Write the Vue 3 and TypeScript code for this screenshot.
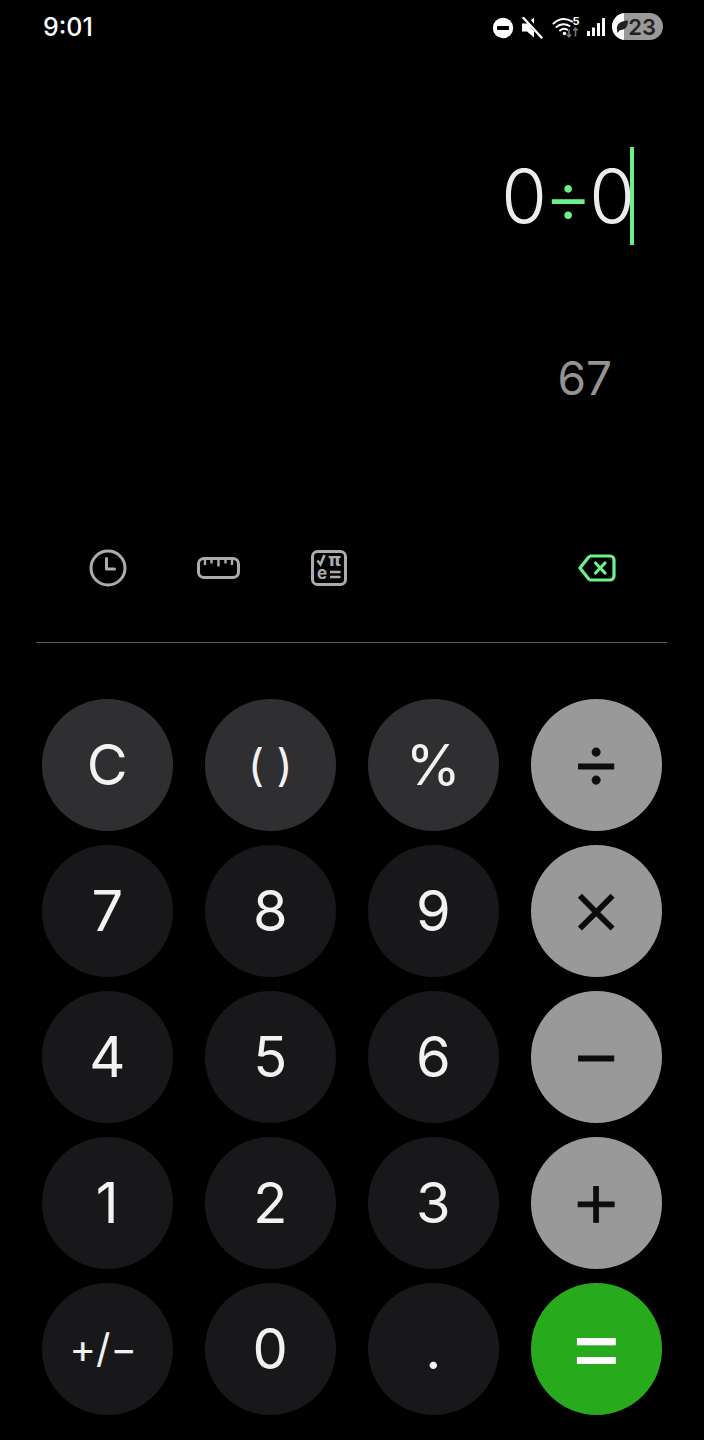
<template>
  <div class="screen">
    <div class="status-bar">
      <span class="time">9:01</span>
      <div class="status-icons">
        <svg class="ic-dnd" width="22" height="22" viewBox="0 0 22 22">
          <circle cx="11" cy="11" r="10.200" fill="#fff" />
          <rect x="5" y="9" width="12" height="4" rx="0.800" fill="#000" />
        </svg>
        <svg class="ic-mute" width="22" height="23" viewBox="0 0 22 23">
          <path d="M1 7.500h5L13 1.500v20L6 15.500H1z" fill="#fff" />
          <path d="M4 1 21 21" stroke="#000" stroke-width="5" />
          <path d="M2.500 2 20.500 21.500" stroke="#fff" stroke-width="2.400" stroke-linecap="round" />
        </svg>
        <svg class="ic-wifi" width="30" height="24" viewBox="0 0 30 24">
          <path d="M1.500 8.500C7 3.500 14 3 20 6.500M4.500 12c4-3.500 9.500-3.500 13-1M8 15.500c2.500-2 5-2 7-.8" fill="none" stroke="#fff" stroke-width="2" stroke-linecap="round" />
          <circle cx="12.500" cy="18.500" r="1.800" fill="#fff" />
          <text x="20.500" y="9.500" class="wifi-five">5</text>
          <path d="M17 14.500v7M14.800 19.500l2.200 2.300 2.200-2.300" fill="none" stroke="#777" stroke-width="1.600" />
          <path d="M23.500 21.500V13.500M21.300 15.500l2.200-2.300 2.200 2.300" fill="none" stroke="#777" stroke-width="1.600" />
        </svg>
        <svg class="ic-signal" width="20" height="20" viewBox="0 0 20 20">
          <rect x="1" y="14" width="3" height="5" rx="0.500" fill="#fff" />
          <rect x="6" y="10.500" width="3" height="8.500" rx="0.500" fill="#fff" />
          <rect x="11" y="6" width="3" height="13" rx="0.500" fill="#fff" />
          <rect x="16" y="1" width="3" height="18" rx="0.500" fill="#fff" />
        </svg>
        <div class="battery">
          <div class="battery-fill"></div>
          <svg class="battery-leaf" width="14" height="16" viewBox="0 0 14 16">
            <path d="M2 12C1 6 6 2.500 13 2.500c0 6-3 10-8 9.500L2.500 15z" fill="#222" />
          </svg>
          <span class="battery-num">23</span>
        </div>
      </div>
    </div>

    <div class="display">
      <div class="expression">
        <span>0</span><span class="divide">÷</span><span>0</span><span class="caret"></span>
      </div>
      <div class="preview">67</div>
    </div>

    <div class="tools">
      <div class="tools-left">
        <svg width="38" height="38" viewBox="0 0 38 38" fill="none" stroke="#acacac" stroke-width="3">
          <circle cx="19" cy="19" r="17" />
          <path d="M17.500 9.500V20H25.500" stroke-linecap="round" stroke-linejoin="round" />
        </svg>
        <svg width="43" height="22" viewBox="0 0 43 22" fill="none" stroke="#acacac" stroke-width="3">
          <rect x="1.500" y="1.500" width="40" height="19" rx="5.500" />
          <path d="M8 2.500V8M14.500 2.500V6.500M21.500 2.500V9.500M28.500 2.500V6.500M35 2.500V8" stroke-width="2.400" />
        </svg>
        <svg class="ic-formula" width="36" height="36" viewBox="0 0 36 36" fill="none">
          <rect x="1.500" y="1.500" width="33" height="33" rx="5" stroke="#acacac" stroke-width="3" />
          <path d="M6.500 10.500l3 4 4-9.500" stroke="#acacac" stroke-width="2.600" />
          <text x="17" y="16" class="tool-pi">π</text>
          <text x="6" y="29" class="tool-e">e</text>
          <path d="M19 22h10.500M19 27h10.500" stroke="#acacac" stroke-width="2.600" />
        </svg>
      </div>
      <svg class="backspace" width="38" height="28" viewBox="0 0 38 28" fill="none" stroke="#6cf08a" stroke-width="3.200">
        <path d="M13 2h19a4 4 0 0 1 4 4v16a4 4 0 0 1-4 4H13a3 3 0 0 1-2.300-1L2 14l8.700-11A3 3 0 0 1 13 2z" stroke-linejoin="round" />
        <path d="M17.500 9l9.500 10M27 9l-9.500 10" stroke-linecap="round" />
      </svg>
    </div>

    <div class="divider"></div>

    <div class="keypad">
      <button v-for="key in keys" :key="key.label" class="key" :class="key.kind">{{ key.label }}</button>
    </div>
  </div>
</template>

<script setup lang="ts">
interface Key {
  label: string
  kind: string
}

const keys: Key[] = [
  { label: 'C', kind: 'fn' },
  { label: '( )', kind: 'fn paren' },
  { label: '%', kind: 'fn' },
  { label: '÷', kind: 'op' },
  { label: '7', kind: 'num' },
  { label: '8', kind: 'num' },
  { label: '9', kind: 'num' },
  { label: '×', kind: 'op' },
  { label: '4', kind: 'num' },
  { label: '5', kind: 'num' },
  { label: '6', kind: 'num' },
  { label: '−', kind: 'op' },
  { label: '1', kind: 'num' },
  { label: '2', kind: 'num' },
  { label: '3', kind: 'num' },
  { label: '+', kind: 'op' },
  { label: '+/−', kind: 'num small' },
  { label: '0', kind: 'num' },
  { label: '.', kind: 'num' },
  { label: '=', kind: 'equals' }
]
</script>

<style>
html,
body {
  margin: 0;
  background: #000;
}
</style>

<style scoped>
.screen {
  width: 704px;
  height: 1440px;
  background: #000;
  color: #f2f2f2;
  font-family: Inter, "Noto Sans", sans-serif;
  overflow: hidden;
}

.status-bar {
  height: 54px;
  box-sizing: border-box;
  padding: 0 41px 0 43px;
  display: flex;
  align-items: center;
  justify-content: space-between;
}

.time {
  font-size: 25px;
  font-weight: 500;
  color: #fff;
}

.status-icons {
  display: flex;
  align-items: center;
}

.ic-dnd {
  margin-top: 1px;
}

.ic-mute {
  margin-left: 7px;
}

.ic-wifi {
  margin-left: 9px;
}

.ic-signal {
  margin-left: 4px;
}

.wifi-five {
  font-size: 11px;
  font-weight: 700;
  fill: #fff;
  font-family: Inter, sans-serif;
}

.battery {
  position: relative;
  margin-left: 6px;
  margin-top: -1px;
  width: 51px;
  height: 27px;
  border-radius: 14px;
  background: #9a9a9a;
  overflow: hidden;
  display: flex;
  align-items: center;
  justify-content: flex-end;
  padding-right: 7px;
  box-sizing: border-box;
}

.battery-fill {
  position: absolute;
  left: 0;
  top: 0;
  bottom: 0;
  width: 12px;
  background: #fff;
}

.battery-leaf {
  position: absolute;
  left: 3px;
  top: 5px;
}

.battery-num {
  position: relative;
  font-size: 22px;
  font-weight: 600;
  color: #222;
  line-height: 1;
}

.display {
  height: 484px;
  box-sizing: border-box;
  padding: 93px 69px 0 0;
  display: flex;
  flex-direction: column;
  align-items: flex-end;
}

.expression {
  position: relative;
  height: 98px;
  display: flex;
  align-items: center;
  font-size: 74px;
  font-weight: 300;
  color: #ececec;
}

.divide {
  color: #6cf08a;
  margin: 0 -3px;
}

.caret {
  position: absolute;
  right: 1px;
  top: 0;
  width: 4px;
  height: 98px;
  background: #6cf08a;
}

.preview {
  margin-top: 105px;
  margin-right: 23px;
  font-size: 46px;
  font-weight: 400;
  color: #939393;
  line-height: 56px;
}

.tools {
  height: 60px;
  padding: 0 88px 0 89px;
  display: flex;
  align-items: center;
  justify-content: space-between;
}

.tools-left {
  display: flex;
  align-items: center;
  gap: 71px;
}

.tools-left svg:first-child {
  margin-right: -1px;
}

.tool-pi {
  font-size: 17px;
  font-weight: 700;
  fill: #acacac;
  font-family: "DejaVu Sans", sans-serif;
}

.tool-e {
  font-size: 17px;
  font-weight: 700;
  fill: #acacac;
  font-family: Inter, sans-serif;
}

.divider {
  margin: 44px 37px 0 36px;
  height: 1px;
  background: #5a5a5a;
}

.keypad {
  margin-top: 56px;
  padding: 0 41px 0 41.500px;
  display: grid;
  grid-template-columns: repeat(4, 131.500px);
  grid-auto-rows: 132px;
  column-gap: 31.500px;
  row-gap: 14px;
}

.key {
  width: 100%;
  height: 100%;
  border: 0;
  padding: 0;
  border-radius: 50%;
  font-family: inherit;
  font-size: 56px;
  font-weight: 400;
  color: #f2f2f2;
  background: #18181a;
  display: flex;
  align-items: center;
  justify-content: center;
  line-height: 1;
}

.key.fn {
  background: #2f2f31;
}

.key.paren {
  font-size: 44px;
  font-weight: 400;
}

.key.small {
  font-size: 40px;
  padding-right: 8px;
}

.key.op {
  background: #999;
  color: #0c0c0c;
  font-size: 80px;
  font-weight: 300;
  -webkit-text-stroke: 0.800px #0c0c0c;
  padding-bottom: 10px;
}

.key.equals {
  background: #27aa1c;
  color: #fff;
  font-size: 88px;
  padding-bottom: 10px;
}
</style>
